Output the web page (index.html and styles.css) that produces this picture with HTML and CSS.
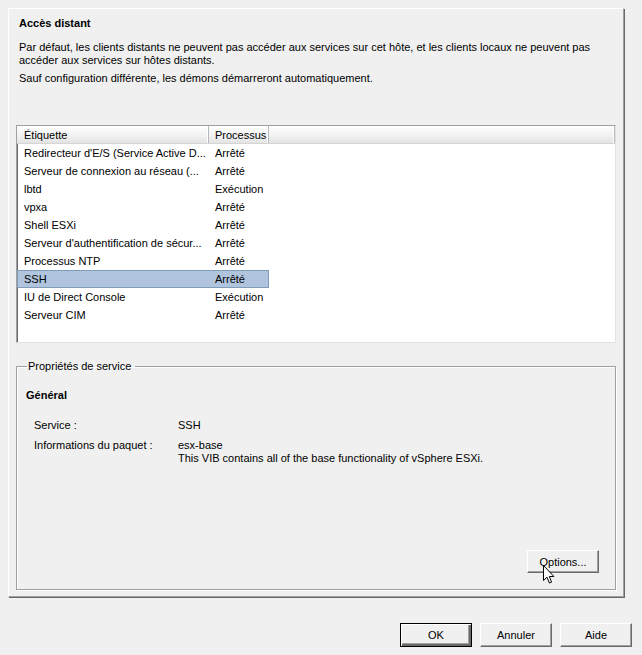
FILE: index.html
```html
<!DOCTYPE html>
<html lang="fr">
<head>
<meta charset="utf-8">
<title>Accès distant</title>
<link rel="stylesheet" href="styles.css">
</head>
<body>
<div class="page">
  <div class="panel">
    <div class="title">Accès distant</div>
    <p class="desc">Par défaut, les clients distants ne peuvent pas accéder aux services sur cet hôte, et les clients locaux ne peuvent pas<br>accéder aux services sur hôtes distants.</p>
    <p class="desc desc2">Sauf configuration différente, les démons démarreront automatiquement.</p>

    <div class="list">
      <div class="list-head">
        <div class="hcell c1">Étiquette</div>
        <div class="hcell c2">Processus</div>
        <div class="hcell fill"></div>
      </div>
      <div class="row"><div class="cell c1">Redirecteur d'E/S (Service Active D...</div><div class="cell c2">Arrêté</div></div>
      <div class="row"><div class="cell c1">Serveur de connexion au réseau (...</div><div class="cell c2">Arrêté</div></div>
      <div class="row"><div class="cell c1">lbtd</div><div class="cell c2">Exécution</div></div>
      <div class="row"><div class="cell c1">vpxa</div><div class="cell c2">Arrêté</div></div>
      <div class="row"><div class="cell c1">Shell ESXi</div><div class="cell c2">Arrêté</div></div>
      <div class="row"><div class="cell c1">Serveur d'authentification de sécur...</div><div class="cell c2">Arrêté</div></div>
      <div class="row"><div class="cell c1">Processus NTP</div><div class="cell c2">Arrêté</div></div>
      <div class="row selected"><div class="cell c1">SSH</div><div class="cell c2">Arrêté</div></div>
      <div class="row"><div class="cell c1">IU de Direct Console</div><div class="cell c2">Exécution</div></div>
      <div class="row"><div class="cell c1">Serveur CIM</div><div class="cell c2">Arrêté</div></div>
    </div>

    <fieldset class="group">
      <legend class="legend">Propriétés de service</legend>
      <div class="section-title">Général</div>
      <div class="props">
        <div class="prop-label">Service :</div>
        <div class="prop-value">SSH</div>
        <div class="prop-label">Informations du paquet :</div>
        <div class="prop-value">esx-base<br>This VIB contains all of the base functionality of vSphere ESXi.</div>
      </div>
      <div class="group-actions">
        <button class="btn options">Options...</button>
      </div>
      <svg class="cursor" width="12" height="20" viewBox="0 0 12 20"><path d="M0.5 0.5 L0.5 15.5 L4 12.2 L6.4 18 L8.6 17.1 L6.3 11.5 L10.9 11.5 Z" fill="#fff" stroke="#000" stroke-width="1" stroke-linejoin="miter"/></svg>
    </fieldset>
  </div>

  <div class="footer">
    <button class="btn default">OK</button>
    <button class="btn">Annuler</button>
    <button class="btn">Aide</button>
  </div>
</div>
</body>
</html>
```

FILE: styles.css
```css
* { box-sizing: border-box; }
html, body { margin: 0; padding: 0; }
body {
  background: #f0f0f0;
  font-family: "Liberation Sans", Arial, sans-serif;
  font-size: 11px;
  color: #000;
  width: 642px;
  height: 655px;
  overflow: hidden;
}
.page { padding: 8px 0 0 8px; }

.panel {
  width: 616px;
  height: 589px;
  border: 1px solid;
  border-color: #ffffff #a0a0a0 #a0a0a0 #ffffff;
  box-shadow: 1px 1px 0 #696969;
  padding: 8px 7px 0 7px;
  display: flex;
  flex-direction: column;
}
.title {
  font-weight: bold;
  line-height: 13px;
  padding-left: 3px;
}
.desc {
  margin: 11px 0 0 0;
  padding-left: 3px;
  line-height: 13px;
}
.desc2 { margin-top: 5px; }

.list {
  margin-top: 40px;
  height: 218px;
  flex: none;
  background: #fff;
  border: 1px solid;
  border-color: #a0a0a0 #e3e3e3 #e3e3e3 #a0a0a0;
  box-shadow: inset 1px 1px 0 #696969;
  padding: 0;
  display: flex;
  flex-direction: column;
}
.list-head {
  display: flex;
  height: 18px;
  flex: none;
  background: linear-gradient(#ffffff, #f2f2f2 55%, #e3e3e3);
  border-bottom: 1px solid #d5d5d5;
}
.hcell {
  line-height: 18px;
  white-space: nowrap;
  overflow: hidden;
  border-right: 1px solid #b8b8b8;
  box-shadow: inset -1px 0 0 #fff;
}
.hcell.c1 { width: 192px; padding-left: 7px; }
.hcell.c2 { width: 60px; padding-left: 6px; }
.hcell.fill { flex: 1; }

.row {
  display: flex;
  height: 18px;
  flex: none;
  width: 252px;
}
.cell {
  line-height: 18px;
  white-space: nowrap;
  overflow: hidden;
}
.cell.c1 { width: 192px; padding-left: 7px; }
.cell.c2 { width: 60px; padding-left: 6px; }
.row.selected {
  background: #b0c4de;
  box-shadow: inset 0 0 0 1px #7f9db9;
}

.group {
  margin: 17px 0 0 0;
  height: 230px;
  flex: none;
  border: 1px solid #a0a0a0;
  box-shadow: 1px 1px 0 #fff, inset 1px 1px 0 #fff;
  padding: 16px 16px 0 9px;
  position: relative;
  min-width: 0;
}
.legend {
  padding: 0 4px 0 1px;
  margin-left: 1px;
  line-height: 13px;
}
.section-title {
  font-weight: bold;
  line-height: 13px;
}
.props {
  margin-top: 17px;
  padding-left: 8px;
  display: grid;
  grid-template-columns: 144px 1fr;
  row-gap: 7px;
  line-height: 13px;
}
.group-actions {
  margin-top: 85px;
  display: flex;
  justify-content: flex-end;
}

.btn {
  font-family: "Liberation Sans", Arial, sans-serif;
  font-size: 11px;
  color: #000;
  width: 72px;
  height: 24px;
  background: #f0f0f0;
  border: 1px solid;
  border-color: #ffffff #696969 #696969 #ffffff;
  box-shadow: inset -1px -1px 0 #a0a0a0;
  padding: 0;
  margin: 0;
}
.btn.options { height: 23px; }
.btn.default {
  border: 1px solid #000;
  box-shadow: inset 1px 1px 0 #fff, inset -2px -2px 0 #696969, inset -3px -3px 0 #a0a0a0;
}

.cursor {
  position: absolute;
  left: 526px;
  top: 192px;
}

.footer {
  display: flex;
  justify-content: flex-end;
  gap: 8px;
  margin-top: 26px;
  padding-right: 10px;
}
```
